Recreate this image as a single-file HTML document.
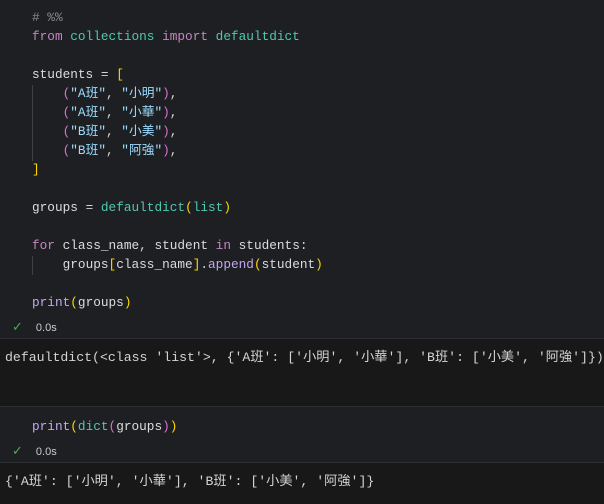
<!DOCTYPE html>
<html><head><meta charset="utf-8"><style>
html,body{margin:0;padding:0;width:604px;height:504px;overflow:hidden;background:#1e1f22;}
.l{position:absolute;white-space:pre;font-family:"Liberation Mono","Noto Sans CJK TC",monospace;font-size:12.75px;line-height:19px;color:#d4d4d4;}
.c{left:32px;}
.k{color:#c586c0}.m{color:#4ec9b0}.v{color:#dcdcdc}.s{color:#9cdcfe}.p{color:#da70d6}.b{color:#ffd700}.f{color:#c3a6f0}.g{color:#8b8b8b}
.o{left:5px;font-size:13.2px;color:#d4d4d4;}
.sep{position:absolute;left:0;width:604px;height:1px;background:#2e2f33;}
.out{position:absolute;left:0;width:604px;background:#181819;}
.ck{position:absolute;left:12px;font-family:"Liberation Sans",sans-serif;font-size:11px;color:#cccccc;}
.ck span{color:#4caf50;font-size:13px;margin-right:13px;}
.guide{position:absolute;left:32px;width:1px;background:#404040;}
</style></head><body>
<div class="out" style="top:339px;height:67px"></div>
<div class="out" style="top:463px;height:41px"></div>
<div class="sep" style="top:338px"></div>
<div class="sep" style="top:406px"></div>
<div class="sep" style="top:462px"></div>
<div class="guide" style="top:85px;height:76px"></div>
<div class="guide" style="top:256px;height:19px"></div>
<div class="l c g" style="top:8px"># %%</div>
<div class="l c" style="top:27px"><span class="k">from</span> <span class="m">collections</span> <span class="k">import</span> <span class="m">defaultdict</span></div>
<div class="l c" style="top:65px"><span class="v">students</span> = <span class="b">[</span></div>
<div class="l c" style="top:84px">    <span class="p">(</span><span class="s">"A班"</span>, <span class="s">"小明"</span><span class="p">)</span>,</div>
<div class="l c" style="top:103px">    <span class="p">(</span><span class="s">"A班"</span>, <span class="s">"小華"</span><span class="p">)</span>,</div>
<div class="l c" style="top:122px">    <span class="p">(</span><span class="s">"B班"</span>, <span class="s">"小美"</span><span class="p">)</span>,</div>
<div class="l c" style="top:141px">    <span class="p">(</span><span class="s">"B班"</span>, <span class="s">"阿強"</span><span class="p">)</span>,</div>
<div class="l c" style="top:160px"><span class="b">]</span></div>
<div class="l c" style="top:198px"><span class="v">groups</span> = <span class="m">defaultdict</span><span class="b">(</span><span class="m">list</span><span class="b">)</span></div>
<div class="l c" style="top:236px"><span class="k">for</span> <span class="v">class_name</span>, <span class="v">student</span> <span class="k">in</span> <span class="v">students</span>:</div>
<div class="l c" style="top:255px">    <span class="v">groups</span><span class="b">[</span><span class="v">class_name</span><span class="b">]</span>.<span class="f">append</span><span class="b">(</span><span class="v">student</span><span class="b">)</span></div>
<div class="l c" style="top:293px"><span class="f">print</span><span class="b">(</span><span class="v">groups</span><span class="b">)</span></div>
<div class="ck" style="top:319px"><span>✓</span>0.0s</div>
<div class="l o" style="top:348px">defaultdict(&lt;class 'list'&gt;, {'A班': ['小明', '小華'], 'B班': ['小美', '阿強']})</div>
<div class="l c" style="top:417px"><span class="f">print</span><span class="b">(</span><span class="m">dict</span><span class="p">(</span><span class="v">groups</span><span class="p">)</span><span class="b">)</span></div>
<div class="ck" style="top:443px"><span>✓</span>0.0s</div>
<div class="l o" style="top:472px">{'A班': ['小明', '小華'], 'B班': ['小美', '阿強']}</div>
</body></html>
